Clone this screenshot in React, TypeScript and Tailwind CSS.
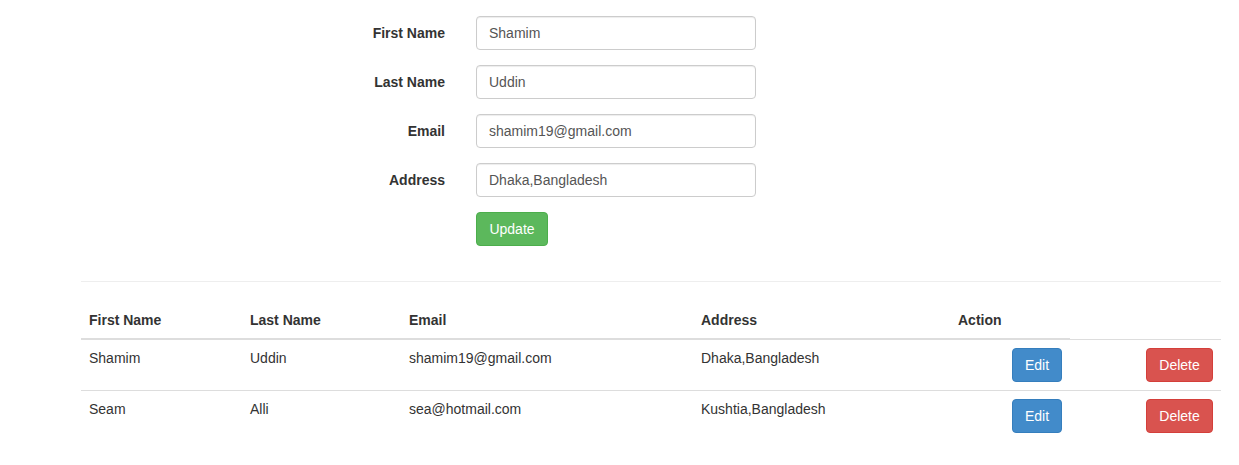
import React from 'react';

const fields = [
  { label: 'First Name', value: 'Shamim' },
  { label: 'Last Name', value: 'Uddin' },
  { label: 'Email', value: 'shamim19@gmail.com' },
  { label: 'Address', value: 'Dhaka,Bangladesh' },
];

const people = [
  { first: 'Shamim', last: 'Uddin', email: 'shamim19@gmail.com', address: 'Dhaka,Bangladesh' },
  { first: 'Seam', last: 'Alli', email: 'sea@hotmail.com', address: 'Kushtia,Bangladesh' },
];

const App = () => {
  return (
    <div className="min-h-[465px] bg-white text-[14px] leading-5 text-[#333] font-['Liberation_Sans',Arial,sans-serif]">
      {/* edit form */}
      <div className="pt-4 ml-[345px] flex flex-col gap-[15px]">
        {fields.map(f => (
          <div key={f.label} className="flex items-start gap-[31px]">
            <label className="w-[100px] pt-[7px] text-right font-bold">{f.label}</label>
            <input
              readOnly
              value={f.value}
              className="w-[280px] h-[34px] px-3 rounded border border-[#ccc] text-[#555] shadow-[inset_0_1px_1px_rgba(0,0,0,0.075)] outline-none"
            />
          </div>
        ))}
        <div className="flex">
          <button className="ml-[131px] h-[34px] w-[72px] rounded border border-[#4cae4c] bg-[#5cb85c] text-white">
            Update
          </button>
        </div>
      </div>

      <hr className="mt-[35px] ml-[81px] w-[1140px] border-0 border-t border-[#eee]" />

      {/* list */}
      <div className="mt-[19px] ml-[81px] w-[1140px]">
        <div className="flex font-bold">
          <div className="flex w-[989px] border-b-2 border-[#ddd]">
            <div className="w-[161px] px-2 pt-[9px] pb-2">First Name</div>
            <div className="w-[159px] px-2 pt-[9px] pb-2">Last Name</div>
            <div className="w-[292px] px-2 pt-[9px] pb-2">Email</div>
            <div className="w-[257px] px-2 pt-[9px] pb-2">Address</div>
            <div className="w-[120px] px-2 pt-[9px] pb-2">Action</div>
          </div>
          <div className="w-[151px]" />
        </div>
        {people.map((p, i) => (
          <div key={p.email} className={`flex border-t border-[#ddd] ${i === 0 ? '-mt-px' : ''}`}>
            <div className="w-[161px] p-2">{p.first}</div>
            <div className="w-[159px] p-2">{p.last}</div>
            <div className="w-[292px] p-2">{p.email}</div>
            <div className="w-[257px] p-2">{p.address}</div>
            <div className="w-[120px] p-2 flex justify-end">
              <button className="h-[34px] w-[50px] rounded border border-[#357ebd] bg-[#428bca] text-white">Edit</button>
            </div>
            <div className="w-[151px] p-2 flex justify-end">
              <button className="h-[34px] w-[67px] rounded border border-[#d43f3a] bg-[#d9534f] text-white">Delete</button>
            </div>
          </div>
        ))}
      </div>
    </div>
  );
};

export default App;
